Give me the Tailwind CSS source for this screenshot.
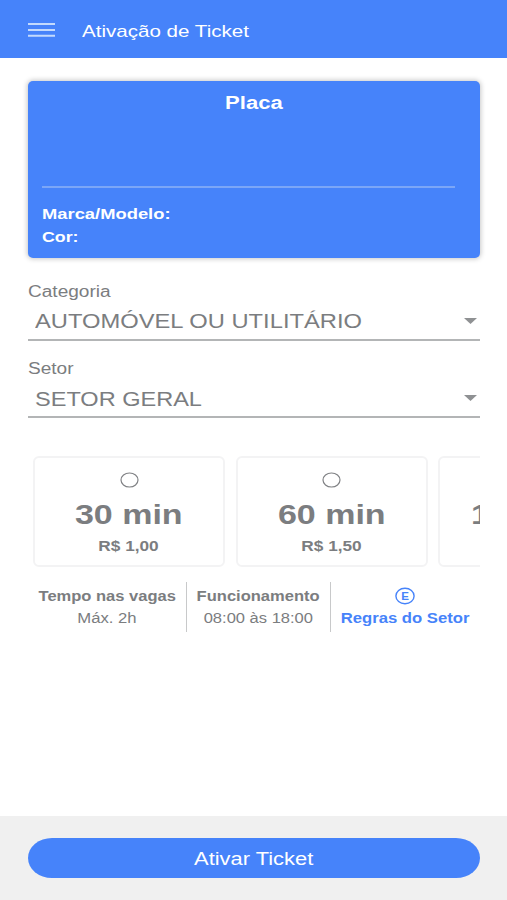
<!DOCTYPE html>
<html lang="pt-BR">
<head>
  <meta charset="UTF-8" />
  <title>Ativação de Ticket</title>
  <meta name="viewport" content="width=device-width, initial-scale=1.0" />
  <script src="https://cdn.jsdelivr.net/npm/@tailwindcss/browser@4"></script>
</head>
<body class="bg-white text-[#7b7d80] h-[900px] flex flex-col overflow-hidden font-['Liberation_Sans',Arial,sans-serif]">

  <!-- Header -->
  <header class="h-[58px] shrink-0 bg-[#4683fa] flex items-center pl-7 pt-0.5">
    <svg class="shrink-0" width="27" height="16" viewBox="0 0 27 16" fill="none" stroke="#c3dafd" stroke-width="1.9">
      <path d="M0 2h27M0 8h27M0 13.7h27" />
    </svg>
    <h1 class="ml-[27px] mt-[3px] text-[17px] leading-5 text-white origin-left scale-x-[1.21] whitespace-nowrap">Ativação de Ticket</h1>
  </header>

  <main class="grow pl-7 pr-[27px] pt-[23px]">

    <!-- Vehicle card -->
    <section class="h-[177px] rounded-[5px] bg-[#4683fa] text-white font-bold shadow-[0_0_5px_1px_rgba(0,0,0,0.22)] pl-3.5 pr-[25px] flex flex-col">
      <h2 class="h-[105px] pt-3 pl-[11px] text-center text-[17.5px] leading-5"><span class="inline-block scale-x-[1.26]">Placa</span></h2>
      <hr class="border-0 h-[2px] bg-[#7ba6f7]" />
      <p class="mt-[15px] text-[14.7px] leading-[23px]"><span class="inline-block origin-left scale-x-[1.25]">Marca/Modelo:</span></p>
      <p class="text-[14.7px] leading-[23px]"><span class="inline-block origin-left scale-x-[1.21]">Cor:</span></p>
    </section>

    <!-- Selects -->
    <div class="mt-[23px] h-[60px] border-b-2 border-[#b3b5b6]">
      <label class="block text-[16px] leading-[22px]"><span class="inline-block origin-left scale-x-[1.19]">Categoria</span></label>
      <div class="mt-[6px] pl-[6.5px] pr-[3px] flex items-center justify-between text-[20.3px] leading-6">
        <span class="origin-left scale-x-[1.17] whitespace-nowrap">AUTOMÓVEL OU UTILITÁRIO</span>
        <svg width="13" height="6" viewBox="0 0 13 6" fill="#8f9193"><path d="M0 0h13L6.5 6z" /></svg>
      </div>
    </div>
    <div class="mt-[17px] h-[60px] border-b-2 border-[#b3b5b6]">
      <label class="block text-[16px] leading-[22px]"><span class="inline-block origin-left scale-x-[1.19]">Setor</span></label>
      <div class="mt-[7px] pl-[6.5px] pr-[3px] flex items-center justify-between text-[20.3px] leading-6">
        <span class="origin-left scale-x-[1.16] whitespace-nowrap">SETOR GERAL</span>
        <svg class="mb-0.5" width="13" height="6" viewBox="0 0 13 6" fill="#8f9193"><path d="M0 0h13L6.5 6z" /></svg>
      </div>
    </div>

    <!-- Time options -->
    <div class="mt-[37px] h-[114px] pt-px pl-[5px] flex gap-[10.5px] overflow-hidden">
      <div class="w-[192px] h-[111px] shrink-0 border-2 border-[#f3f3f4] rounded-md flex flex-col items-center pt-[14px]">
        <svg width="19" height="16" viewBox="0 0 19 16" fill="none" stroke="#808285" stroke-width="1.2"><ellipse cx="9.5" cy="8" rx="8.5" ry="7" /></svg>
        <p class="mt-[11px] text-[27px] leading-8 font-bold scale-x-[1.26]">30 min</p>
        <p class="mt-[5px] text-[14px] leading-5 font-bold scale-x-[1.23]">R$ 1,00</p>
      </div>
      <div class="w-[192px] h-[111px] shrink-0 border-2 border-[#f3f3f4] rounded-md flex flex-col items-center pt-[14px]">
        <svg width="19" height="16" viewBox="0 0 19 16" fill="none" stroke="#808285" stroke-width="1.2"><ellipse cx="9.5" cy="8" rx="8.5" ry="7" /></svg>
        <p class="mt-[11px] text-[27px] leading-8 font-bold scale-x-[1.26]">60 min</p>
        <p class="mt-[5px] text-[14px] leading-5 font-bold scale-x-[1.23]">R$ 1,50</p>
      </div>
      <div class="w-[192px] h-[111px] shrink-0 border-2 border-[#f3f3f4] rounded-md flex flex-col items-center pt-[14px]">
        <svg width="19" height="16" viewBox="0 0 19 16" fill="none" stroke="#808285" stroke-width="1.2"><ellipse cx="9.5" cy="8" rx="8.5" ry="7" /></svg>
        <p class="mt-[11px] text-[27px] leading-8 font-bold scale-x-[1.26]">120 min</p>
      </div>
    </div>

    <!-- Sector info -->
    <div class="mt-[13px] h-[50px] flex text-center text-[14px] leading-[22px] whitespace-nowrap">
      <div class="w-[159px] border-r border-[#c8c9ca] pt-[3px] flex flex-col items-center">
        <p class="font-bold scale-x-[1.18]">Tempo nas vagas</p>
        <p class="scale-x-[1.19]">Máx. 2h</p>
      </div>
      <div class="w-[144px] border-r border-[#c8c9ca] pt-[3px] flex flex-col items-center">
        <p class="font-bold scale-x-[1.18]">Funcionamento</p>
        <p class="scale-x-[1.18]">08:00 às 18:00</p>
      </div>
      <div class="w-[149px] pt-[5px] text-[#4683fa] flex flex-col items-center">
        <svg class="mr-px" width="20" height="18" viewBox="0 0 20 18">
          <ellipse cx="10" cy="9" rx="9.1" ry="7.8" fill="none" stroke="currentColor" stroke-width="1.4" />
          <text x="10.2" y="13" text-anchor="middle" font-size="11.5" font-weight="bold" fill="currentColor">E</text>
        </svg>
        <p class="mt-[2px] font-bold scale-x-[1.19]">Regras do Setor</p>
      </div>
    </div>
  </main>

  <!-- Footer -->
  <footer class="h-[84px] shrink-0 bg-[#f0f0f0] pl-7 pr-[27px] pt-[22px]">
    <button class="w-full h-10 rounded-[24px/20px] bg-[#4683fa] text-white text-[17.5px] leading-5 flex items-center justify-center pt-px">
      <span class="scale-x-[1.25]">Ativar Ticket</span>
    </button>
  </footer>

</body>
</html>
